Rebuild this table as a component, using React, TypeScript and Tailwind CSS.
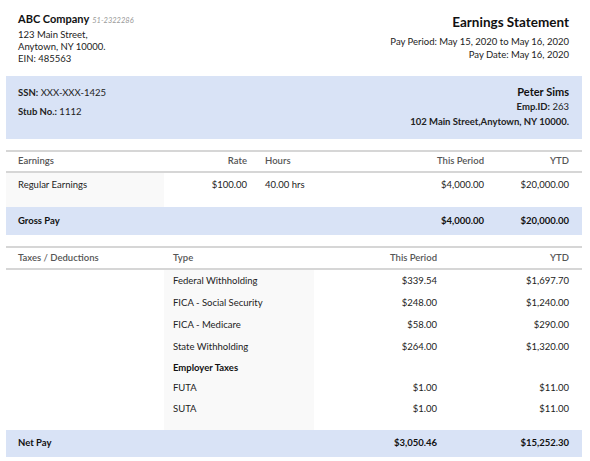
import React from "react";

const taxes = [
  { t: "Federal Withholding", p: "$339.54", y: "$1,697.70" },
  { t: "FICA - Social Security", p: "$248.00", y: "$1,240.00" },
  { t: "FICA - Medicare", p: "$58.00", y: "$290.00" },
  { t: "State Withholding", p: "$264.00", y: "$1,320.00" },
];

export default function App() {
  return (
    <div
      className="w-[590px] h-[461px] bg-white text-[#222] overflow-hidden"
      style={{ fontFamily: "Lato, 'Noto Sans', sans-serif" }}
    >
      <div className="px-[6px] w-[588px]">
        {/* Header */}
        <div className="flex justify-between pl-3 pr-[13px] pt-[12px] h-[76px]">
          <div className="text-[9.5px] leading-[12px]">
            <div className="flex items-baseline gap-[3px] h-[16px] pt-[1px]">
              <span className="text-[11px] font-bold text-[#111]">ABC Company</span>
              <span className="text-[7.5px] italic text-[#999]">51-2322286</span>
            </div>
            <div className="pt-[1px]">123 Main Street,</div>
            <div>Anytown, NY 10000.</div>
            <div>EIN: 485563</div>
          </div>
          <div className="text-right text-[9.5px] leading-[13px]">
            <div className="text-[13.5px] font-bold text-[#111] leading-[18px] pt-[1px] mb-[4px]">Earnings Statement</div>
            <div>Pay Period: May 15, 2020 to May 16, 2020</div>
            <div>Pay Date: May 16, 2020</div>
          </div>
        </div>

        {/* Employee band */}
        <div className="bg-[#d9e3f6] h-[63px] flex justify-between pl-3 pr-[13px] pt-[8px] text-[9.5px]">
          <div className="leading-[19px] -mt-[1px]">
            <div><b>SSN:</b> XXX-XXX-1425</div>
            <div><b>Stub No.:</b> 1112</div>
          </div>
          <div className="text-right leading-[15px]">
            <div className="text-[11px] font-bold text-[#111] leading-[16px]">Peter Sims</div>
            <div className="-mt-[1px]"><b>Emp.ID:</b> 263</div>
            <div className="font-bold">102 Main Street,Anytown, NY 10000.</div>
          </div>
        </div>

        {/* Earnings table */}
        <div className="mt-[11px] border-t-2 border-[#d6d6d6] text-[9.5px]">
          <div className="grid grid-cols-[158px_95px_1fr_90px_85px] h-[21px] items-center border-b-2 border-[#d6d6d6] text-[#555] font-semibold">
            <div className="pl-3">Earnings</div>
            <div className="text-right pr-3">Rate</div>
            <div className="pl-[6px]">Hours</div>
            <div className="text-right pr-[13px]">This Period</div>
            <div className="text-right pr-[13px]">YTD</div>
          </div>
          <div className="grid grid-cols-[158px_95px_1fr_90px_85px] h-[34px]">
            <div className="bg-[#f9f9f9] pl-3 pt-[5px]">Regular Earnings</div>
            <div className="text-right pr-3 pt-[5px]">$100.00</div>
            <div className="pl-[6px] pt-[5px]">40.00 hrs</div>
            <div className="text-right pr-[13px] pt-[5px]">$4,000.00</div>
            <div className="text-right pr-[13px] pt-[5px]">$20,000.00</div>
          </div>
          <div className="grid grid-cols-[158px_95px_1fr_90px_85px] h-[28px] items-center bg-[#d9e3f6] font-bold text-[#111]">
            <div className="pl-3">Gross Pay</div>
            <div></div>
            <div></div>
            <div className="text-right pr-[13px]">$4,000.00</div>
            <div className="text-right pr-[13px]">$20,000.00</div>
          </div>
        </div>

        {/* Taxes table */}
        <div className="mt-[11px] border-t-2 border-[#d6d6d6] text-[9.5px]">
          <div className="grid grid-cols-[158px_150px_1fr_132px] h-[22px] items-center border-b-2 border-[#d6d6d6] text-[#555] font-semibold">
            <div className="pl-3">Taxes / Deductions</div>
            <div className="pl-[9px]">Type</div>
            <div className="text-right pr-[13px]">This Period</div>
            <div className="text-right pr-[13px]">YTD</div>
          </div>
          <div className="grid grid-cols-[158px_150px_1fr_132px]">
            <div></div>
            <div className="bg-[#f9f9f9] pb-[10px]">
              {taxes.map((r) => (
                <div key={r.t} className="h-[22px] flex items-center pl-[9px]">{r.t}</div>
              ))}
              <div className="h-[20px] flex items-center pl-[9px] font-bold text-[#111]">Employer Taxes</div>
              <div className="h-[21px] flex items-center pl-[9px]">FUTA</div>
              <div className="h-[21px] flex items-center pl-[9px]">SUTA</div>
            </div>
            <div>
              {taxes.map((r) => (
                <div key={r.t} className="h-[22px] flex items-center justify-end pr-[13px]">{r.p}</div>
              ))}
              <div className="h-[20px]"></div>
              <div className="h-[21px] flex items-center justify-end pr-[13px]">$1.00</div>
              <div className="h-[21px] flex items-center justify-end pr-[13px]">$1.00</div>
            </div>
            <div>
              {taxes.map((r) => (
                <div key={r.t} className="h-[22px] flex items-center justify-end pr-[13px]">{r.y}</div>
              ))}
              <div className="h-[20px]"></div>
              <div className="h-[21px] flex items-center justify-end pr-[13px]">$11.00</div>
              <div className="h-[21px] flex items-center justify-end pr-[13px]">$11.00</div>
            </div>
          </div>
          <div className="grid grid-cols-[158px_150px_1fr_132px] h-[27px] items-center bg-[#d9e3f6] font-bold text-[#111]">
            <div className="pl-3">Net Pay</div>
            <div></div>
            <div className="text-right pr-[13px]">$3,050.46</div>
            <div className="text-right pr-[13px]">$15,252.30</div>
          </div>
        </div>
      </div>
    </div>
  );
}
